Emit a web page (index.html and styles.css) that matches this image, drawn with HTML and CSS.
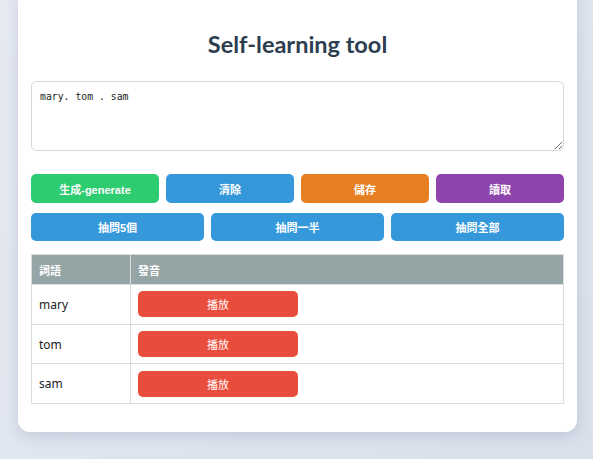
FILE: index.html
```html
<!DOCTYPE html>
<html lang="zh-Hant">
<head>
<meta charset="utf-8">
<title>Self-learning tool</title>
<link rel="stylesheet" href="styles.css">
</head>
<body>
<div class="card">
  <h1 class="title">Self-learning tool</h1>
  <textarea class="input">mary. tom . sam</textarea>
  <div class="row row-4">
    <button class="btn green">生成-generate</button>
    <button class="btn blue">清除</button>
    <button class="btn orange">儲存</button>
    <button class="btn purple">讀取</button>
  </div>
  <div class="row row-3">
    <button class="btn blue">抽問5個</button>
    <button class="btn blue">抽問一半</button>
    <button class="btn blue">抽問全部</button>
  </div>
  <table class="words">
    <thead>
      <tr><th class="col-word">詞語</th><th>發音</th></tr>
    </thead>
    <tbody>
      <tr><td>mary</td><td><button class="play">播放</button></td></tr>
      <tr><td>tom</td><td><button class="play">播放</button></td></tr>
      <tr><td>sam</td><td><button class="play">播放</button></td></tr>
    </tbody>
  </table>
</div>
</body>
</html>
```
FILE: styles.css
```css
html, body {
  margin: 0;
  padding: 0;
  height: 100%;
}
body {
  background: linear-gradient(135deg, #e6eaf2 0%, #d9e0eb 100%);
  font-family: "Noto Sans", "Noto Sans CJK TC", sans-serif;
  overflow: hidden;
}
.card {
  width: 533px;
  margin: -10px 0 0 18px;
  padding: 13px 13px 28px;
  background: #fff;
  border-radius: 12px;
  box-shadow: 0 4px 14px rgba(60, 80, 120, 0.18);
}
.title {
  font-family: "Lato", "Noto Sans CJK TC", sans-serif;
  font-weight: 700;
  font-size: 23.5px;
  line-height: 29px;
  color: #2c3e50;
  text-align: center;
  margin: 27px 0 22px;
}
.input {
  display: block;
  box-sizing: border-box;
  width: 100%;
  height: 70px;
  margin: 0;
  padding: 8px 8px;
  border: 1px solid #d5d8dc;
  border-radius: 5px;
  font-family: "DejaVu Sans Mono", monospace;
  font-size: 9.8px;
  line-height: 14px;
  color: #222;
  resize: vertical;
}
.row {
  display: grid;
  column-gap: 7px;
}
.row-4 {
  grid-template-columns: repeat(4, 1fr);
  margin-top: 23px;
}
.row-3 {
  grid-template-columns: repeat(3, 1fr);
  margin-top: 10px;
}
.btn {
  height: 29px;
  border: none;
  border-radius: 5px;
  color: #fff;
  font-family: "Liberation Sans", "Noto Sans CJK TC", sans-serif;
  font-size: 11px;
  font-weight: 700;
  padding: 0;
}
.row-3 .btn { height: 28px; }
.green { background: #2ecc71; }
.blue { background: #3498db; }
.orange { background: #e67e22; }
.purple { background: #8e44ad; }
.words {
  width: 100%;
  margin-top: 13px;
  border-collapse: collapse;
  font-size: 12px;
  color: #222;
}
.words th, .words td {
  border: 1px solid #dcdcdc;
  text-align: left;
  padding: 0 7px;
}
.words th {
  background: #95a5a6;
  color: #fff;
  font-family: "Noto Sans CJK TC", sans-serif;
  font-size: 11px;
  font-weight: 700;
  height: 29px;
}
.words td {
  height: 38.7px;
}
.col-word {
  width: 84px;
}
.play {
  display: block;
  width: 160px;
  height: 26px;
  border: none;
  border-radius: 5px;
  background: #e74c3c;
  color: #fff;
  font-family: "Noto Sans CJK TC", sans-serif;
  font-size: 11px;
  padding: 0;
}
```
